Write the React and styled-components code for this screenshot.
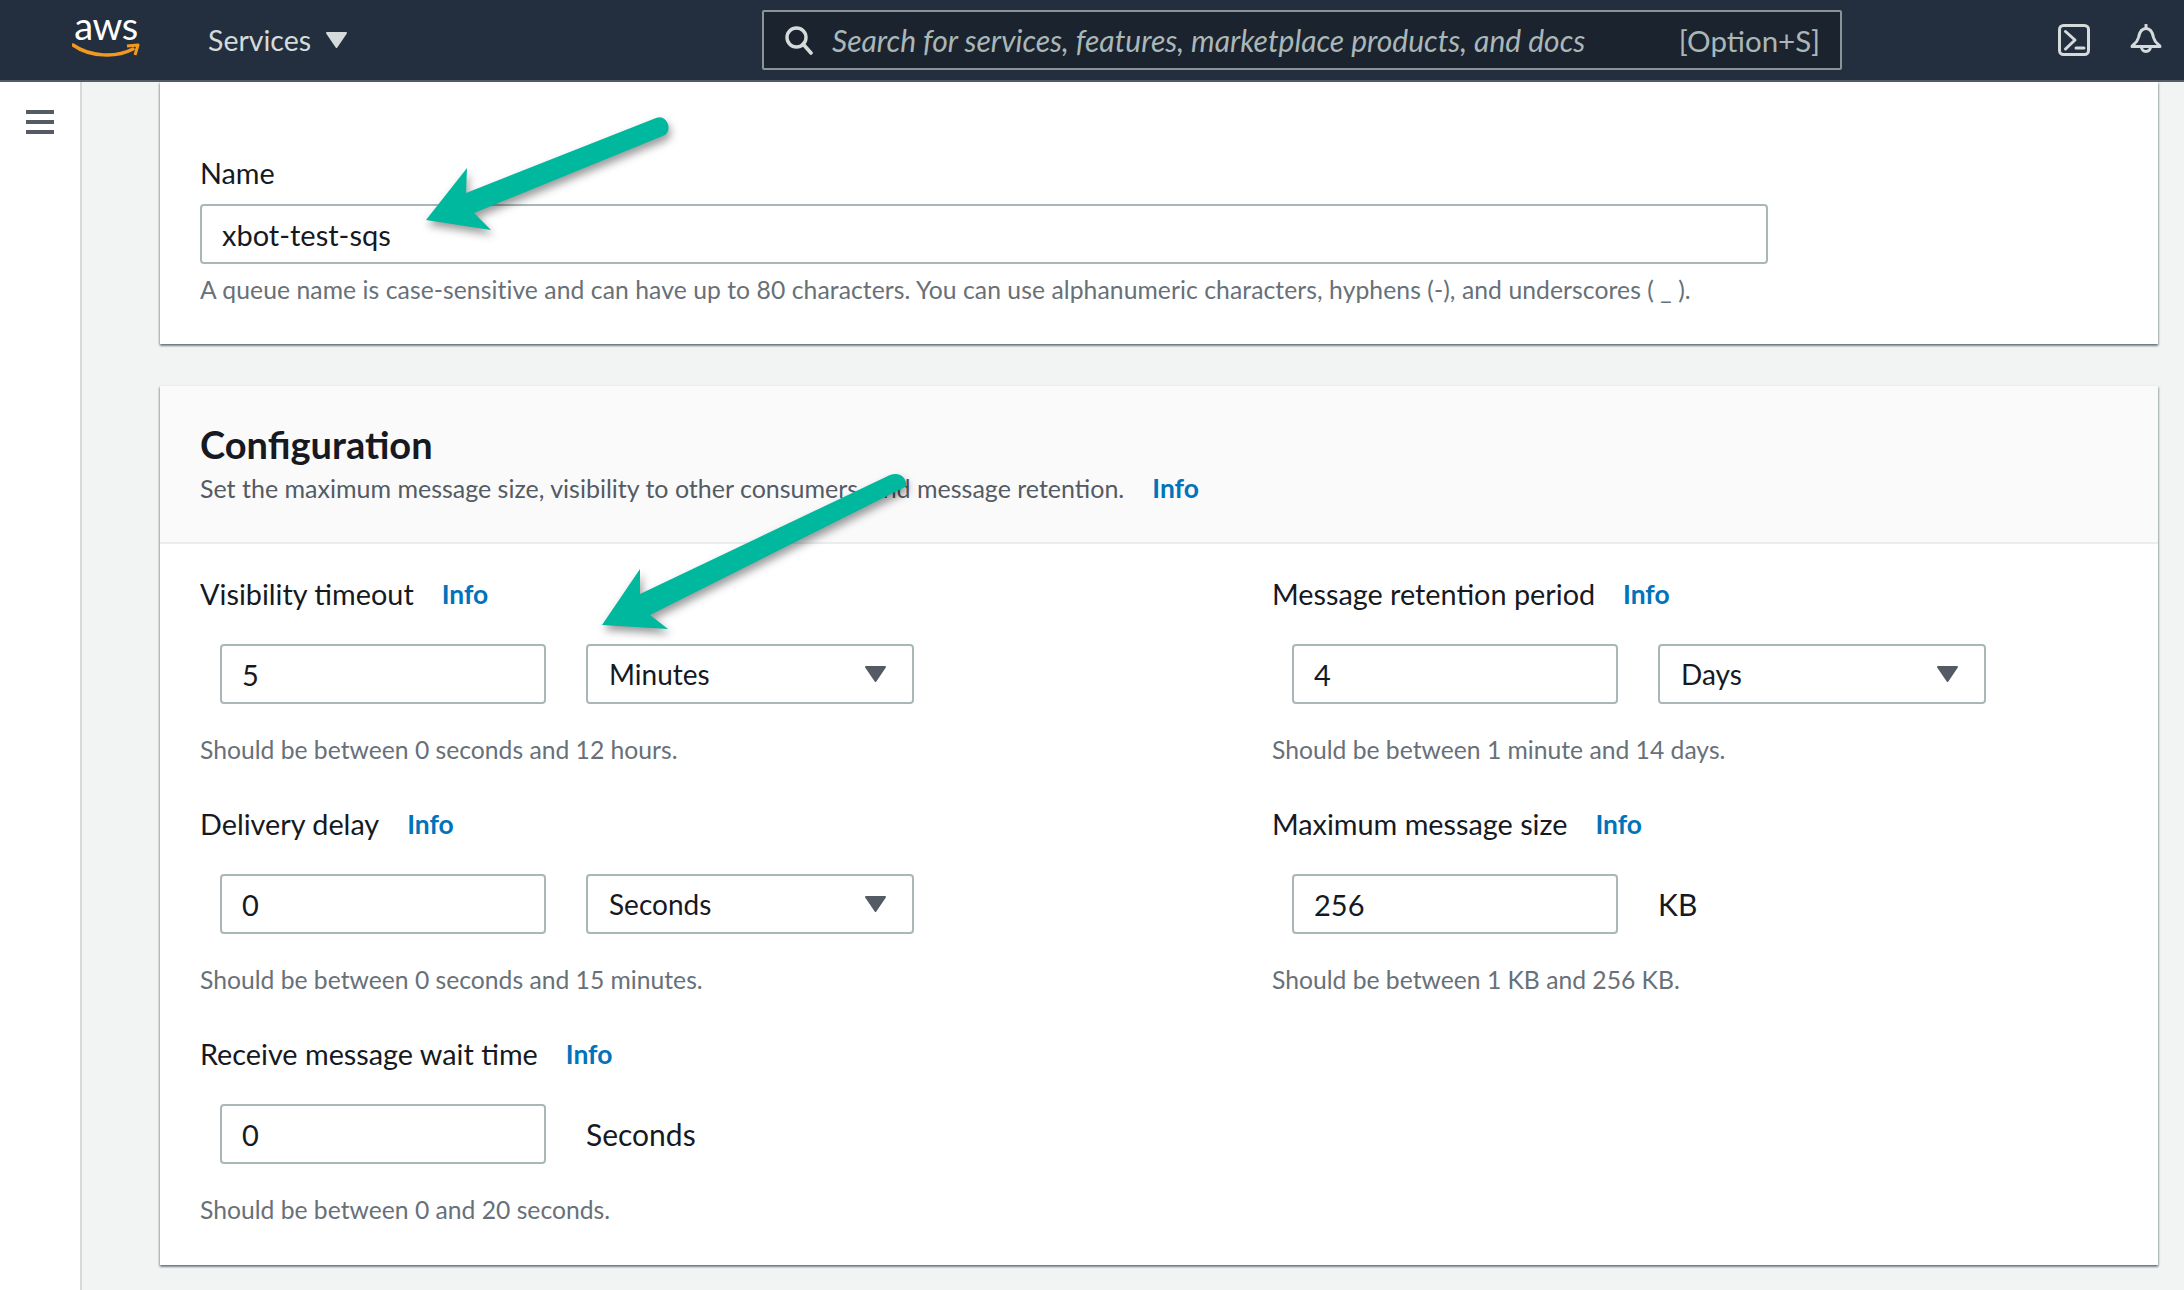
import React from "react";
import styled, { createGlobalStyle } from "styled-components";

const GlobalStyle = createGlobalStyle`
  html, body {
    margin: 0;
    padding: 0;
    background: #f2f3f3;
  }
  body {
    font-family: Lato, "Noto Sans", Arial, sans-serif;
    color: #16191f;
  }
`;

const Page = styled.div`
  position: relative;
  width: 2184px;
  height: 1290px;
  overflow: hidden;
`;

const Header = styled.header`
  display: flex;
  align-items: center;
  box-sizing: border-box;
  height: 82px;
  padding-left: 72px;
  background: #232f3e;
  border-bottom: 2px solid #545b64;
`;

const Logo = styled.div`
  width: 68px;
  height: 50px;
  margin-right: 68px;
  margin-top: -16px;
`;

const LogoWord = styled.span`
  display: block;
  font-size: 38px;
  line-height: 36px;
  letter-spacing: -0.5px;
  color: #fff;
  text-align: center;
`;

const Services = styled.div`
  display: flex;
  align-items: center;
  gap: 15px;
  width: 554px;
  font-size: 28.5px;
  color: #d5dbdb;
`;

const SearchBox = styled.div`
  display: flex;
  align-items: center;
  box-sizing: border-box;
  width: 1080px;
  height: 60px;
  padding: 0 20px;
  background: #1b232e;
  border: 2px solid #879596;
  border-radius: 2px;
  color: #aab7b8;
  font-size: 29.5px;
`;

const Placeholder = styled.span`
  flex: 1;
  margin-left: 18px;
  font-size: 30px;
  font-style: italic;
`;

const HeaderIcons = styled.div`
  display: flex;
  gap: 40px;
  margin-left: 216px;
`;

const Body = styled.div`
  display: flex;
  height: 1208px;
`;

const Sidebar = styled.aside`
  box-sizing: border-box;
  width: 82px;
  padding: 28px 0 0 26px;
  background: #fff;
  border-right: 2px solid #d5dbdb;
`;

const MenuBars = styled.div`
  display: flex;
  flex-direction: column;
  gap: 6px;
  width: 28px;
`;

const MenuBar = styled.span`
  height: 4px;
  background: #545b64;
`;

const Main = styled.main`
  display: flex;
  flex-direction: column;
  gap: 42px;
  width: 1998px;
  margin-left: 78px;
`;

const Card = styled.section`
  background: #fff;
  box-shadow: 0 2px 2px 0 rgba(0, 28, 36, 0.4), 1px 1px 2px 0 rgba(0, 28, 36, 0.2),
    -1px 1px 2px 0 rgba(0, 28, 36, 0.2);
`;

const NameBlock = styled.div`
  padding: 71px 40px 36px;
`;

const Label = styled.div`
  display: flex;
  align-items: center;
  font-size: 28.8px;
  line-height: 40px;
  color: #16191f;
`;

const Info = styled.span`
  margin-left: 28px;
  font-size: 26.4px;
  font-weight: 700;
  color: #0073bb;
`;

const TextBox = styled.div`
  box-sizing: border-box;
  width: ${(p) => p.$width || "100%"};
  height: 60px;
  padding: 0 20px;
  background: #fff;
  border: 2px solid #aab7b8;
  border-radius: 4px;
  font-size: 29px;
  line-height: 58px;
  color: #16191f;
`;

const NameInput = styled(TextBox)`
  width: 1568px;
  margin-top: 11px;
`;

const Hint = styled.div`
  margin-top: 28px;
  font-size: 24.7px;
  line-height: 36px;
  color: #687078;
`;

const NameHint = styled(Hint)`
  margin-top: 8px;
  letter-spacing: 0.07px;
`;

const CardHead = styled.div`
  padding: 36px 40px 36px;
  background: #fafafa;
  border-bottom: 2px solid #eaeded;
`;

const Title = styled.h2`
  margin: 0 0 4px;
  font-size: 38px;
  line-height: 44px;
  font-weight: 700;
  color: #16191f;
`;

const Description = styled.p`
  margin: 0;
  font-size: 25px;
  line-height: 36px;
  color: #545b64;
`;

const FieldGrid = styled.div`
  display: grid;
  grid-template-columns: 1072px 1fr;
  grid-auto-rows: 194px;
  row-gap: 36px;
  padding: 30px 40px 37px;
`;

const Field = styled.div`
  grid-column: ${(p) => p.$col};
`;

const Controls = styled.div`
  display: flex;
  align-items: center;
  gap: 40px;
  margin-top: 30px;
  padding-left: 20px;
`;

const SelectBox = styled.div`
  display: flex;
  align-items: center;
  justify-content: space-between;
  box-sizing: border-box;
  width: 328px;
  height: 60px;
  padding: 0 26px 0 21px;
  border: 2px solid #aab7b8;
  border-radius: 4px;
  font-size: 28px;
  color: #16191f;
`;

const Unit = styled.span`
  font-size: 30px;
  color: #16191f;
`;

const ArrowLayer = styled.svg`
  position: absolute;
  top: 0;
  left: 0;
  pointer-events: none;
  filter: drop-shadow(2px 5px 4px rgba(0, 0, 0, 0.4));
`;

const Triangle = ({ color, w = 21, h = 16 }) => (
  <svg width={w} height={h} viewBox="0 0 21 16">
    <path d="M1 1h19L10.5 15z" fill={color} stroke={color} strokeWidth="2" strokeLinejoin="round" />
  </svg>
);

const fields = [
  {
    col: 1,
    label: "Visibility timeout",
    value: "5",
    select: "Minutes",
    hint: "Should be between 0 seconds and 12 hours.",
  },
  {
    col: 2,
    label: "Message retention period",
    value: "4",
    select: "Days",
    hint: "Should be between 1 minute and 14 days.",
  },
  {
    col: 1,
    label: "Delivery delay",
    value: "0",
    select: "Seconds",
    hint: "Should be between 0 seconds and 15 minutes.",
  },
  {
    col: 2,
    label: "Maximum message size",
    value: "256",
    unit: "KB",
    hint: "Should be between 1 KB and 256 KB.",
  },
  {
    col: 1,
    label: "Receive message wait time",
    value: "0",
    unit: "Seconds",
    hint: "Should be between 0 and 20 seconds.",
  },
];

export default function App() {
  return (
    <Page>
      <GlobalStyle />
      <Header>
        <Logo>
          <LogoWord>aws</LogoWord>
          <svg width="68" height="18" viewBox="0 0 68 18">
            <path d="M1 2C18 14 44 15 61 6" fill="none" stroke="#f29a1f" strokeWidth="3.4" strokeLinecap="round" />
            <path d="M55 3l11-1-3 10" fill="none" stroke="#f29a1f" strokeWidth="3" strokeLinejoin="round" />
          </svg>
        </Logo>
        <Services>
          Services
          <Triangle color="#d5dbdb" />
        </Services>
        <SearchBox>
          <svg width="30" height="30" viewBox="0 0 30 30">
            <circle cx="12.5" cy="12.5" r="9.5" fill="none" stroke="#d5dbdb" strokeWidth="3.4" />
            <path d="M19 19l8 9" stroke="#d5dbdb" strokeWidth="3.6" strokeLinecap="round" />
          </svg>
          <Placeholder>Search for services, features, marketplace products, and docs</Placeholder>
          <span>[Option+S]</span>
        </SearchBox>
        <HeaderIcons>
          <svg width="32" height="32" viewBox="0 0 32 32" fill="none" stroke="#d5dbdb" strokeWidth="3">
            <rect x="1.5" y="1.5" width="29" height="29" rx="4" />
            <path d="M7.5 7.5L17 16l-9.5 9M18 24h8" strokeLinecap="round" strokeLinejoin="round" />
          </svg>
          <svg width="32" height="32" viewBox="0 0 32 32" fill="none" stroke="#d5dbdb" strokeWidth="3">
            <path d="M16 1v3" strokeLinecap="round" />
            <path
              d="M2 22.5c0-1.500 5-3 6.500-9C9.500 8 12 4.500 16 4.500s6.500 3.500 7.500 9c1.500 6 6.500 7.500 6.500 9z"
              strokeLinejoin="round"
            />
            <path d="M11.500 23a4.500 4.500 0 0 0 9 0" />
          </svg>
        </HeaderIcons>
      </Header>
      <Body>
        <Sidebar>
          <MenuBars>
            <MenuBar />
            <MenuBar />
            <MenuBar />
          </MenuBars>
        </Sidebar>
        <Main>
          <Card>
            <NameBlock>
              <Label>Name</Label>
              <NameInput>xbot-test-sqs</NameInput>
              <NameHint>
                A queue name is case-sensitive and can have up to 80 characters. You can use alphanumeric
                characters, hyphens (-), and underscores ( _ ).
              </NameHint>
            </NameBlock>
          </Card>
          <Card>
            <CardHead>
              <Title>Configuration</Title>
              <Description>
                Set the maximum message size, visibility to other consumers, and message retention.
                <Info>Info</Info>
              </Description>
            </CardHead>
            <FieldGrid>
              {fields.map((field) => (
                <Field key={field.label} $col={field.col}>
                  <Label>
                    {field.label}
                    <Info>Info</Info>
                  </Label>
                  <Controls>
                    <TextBox $width="326px">{field.value}</TextBox>
                    {field.select && (
                      <SelectBox>
                        {field.select}
                        <Triangle color="#545b64" />
                      </SelectBox>
                    )}
                    {field.unit && <Unit>{field.unit}</Unit>}
                  </Controls>
                  <Hint>{field.hint}</Hint>
                </Field>
              ))}
            </FieldGrid>
          </Card>
        </Main>
      </Body>
      <ArrowLayer width="2184" height="1290" viewBox="0 0 2184 1290">
        <path
          d="M426 220L467 168L466 193L656 118Q664 115 668 124Q670 131 665 135L474 213L491 230Z"
          fill="#00b89e"
        />
        <path
          d="M602 625L640 569L640 594L890 475Q899 472 904 478Q908 484 905 487L650 615L668 629Z"
          fill="#00b89e"
        />
      </ArrowLayer>
    </Page>
  );
}
